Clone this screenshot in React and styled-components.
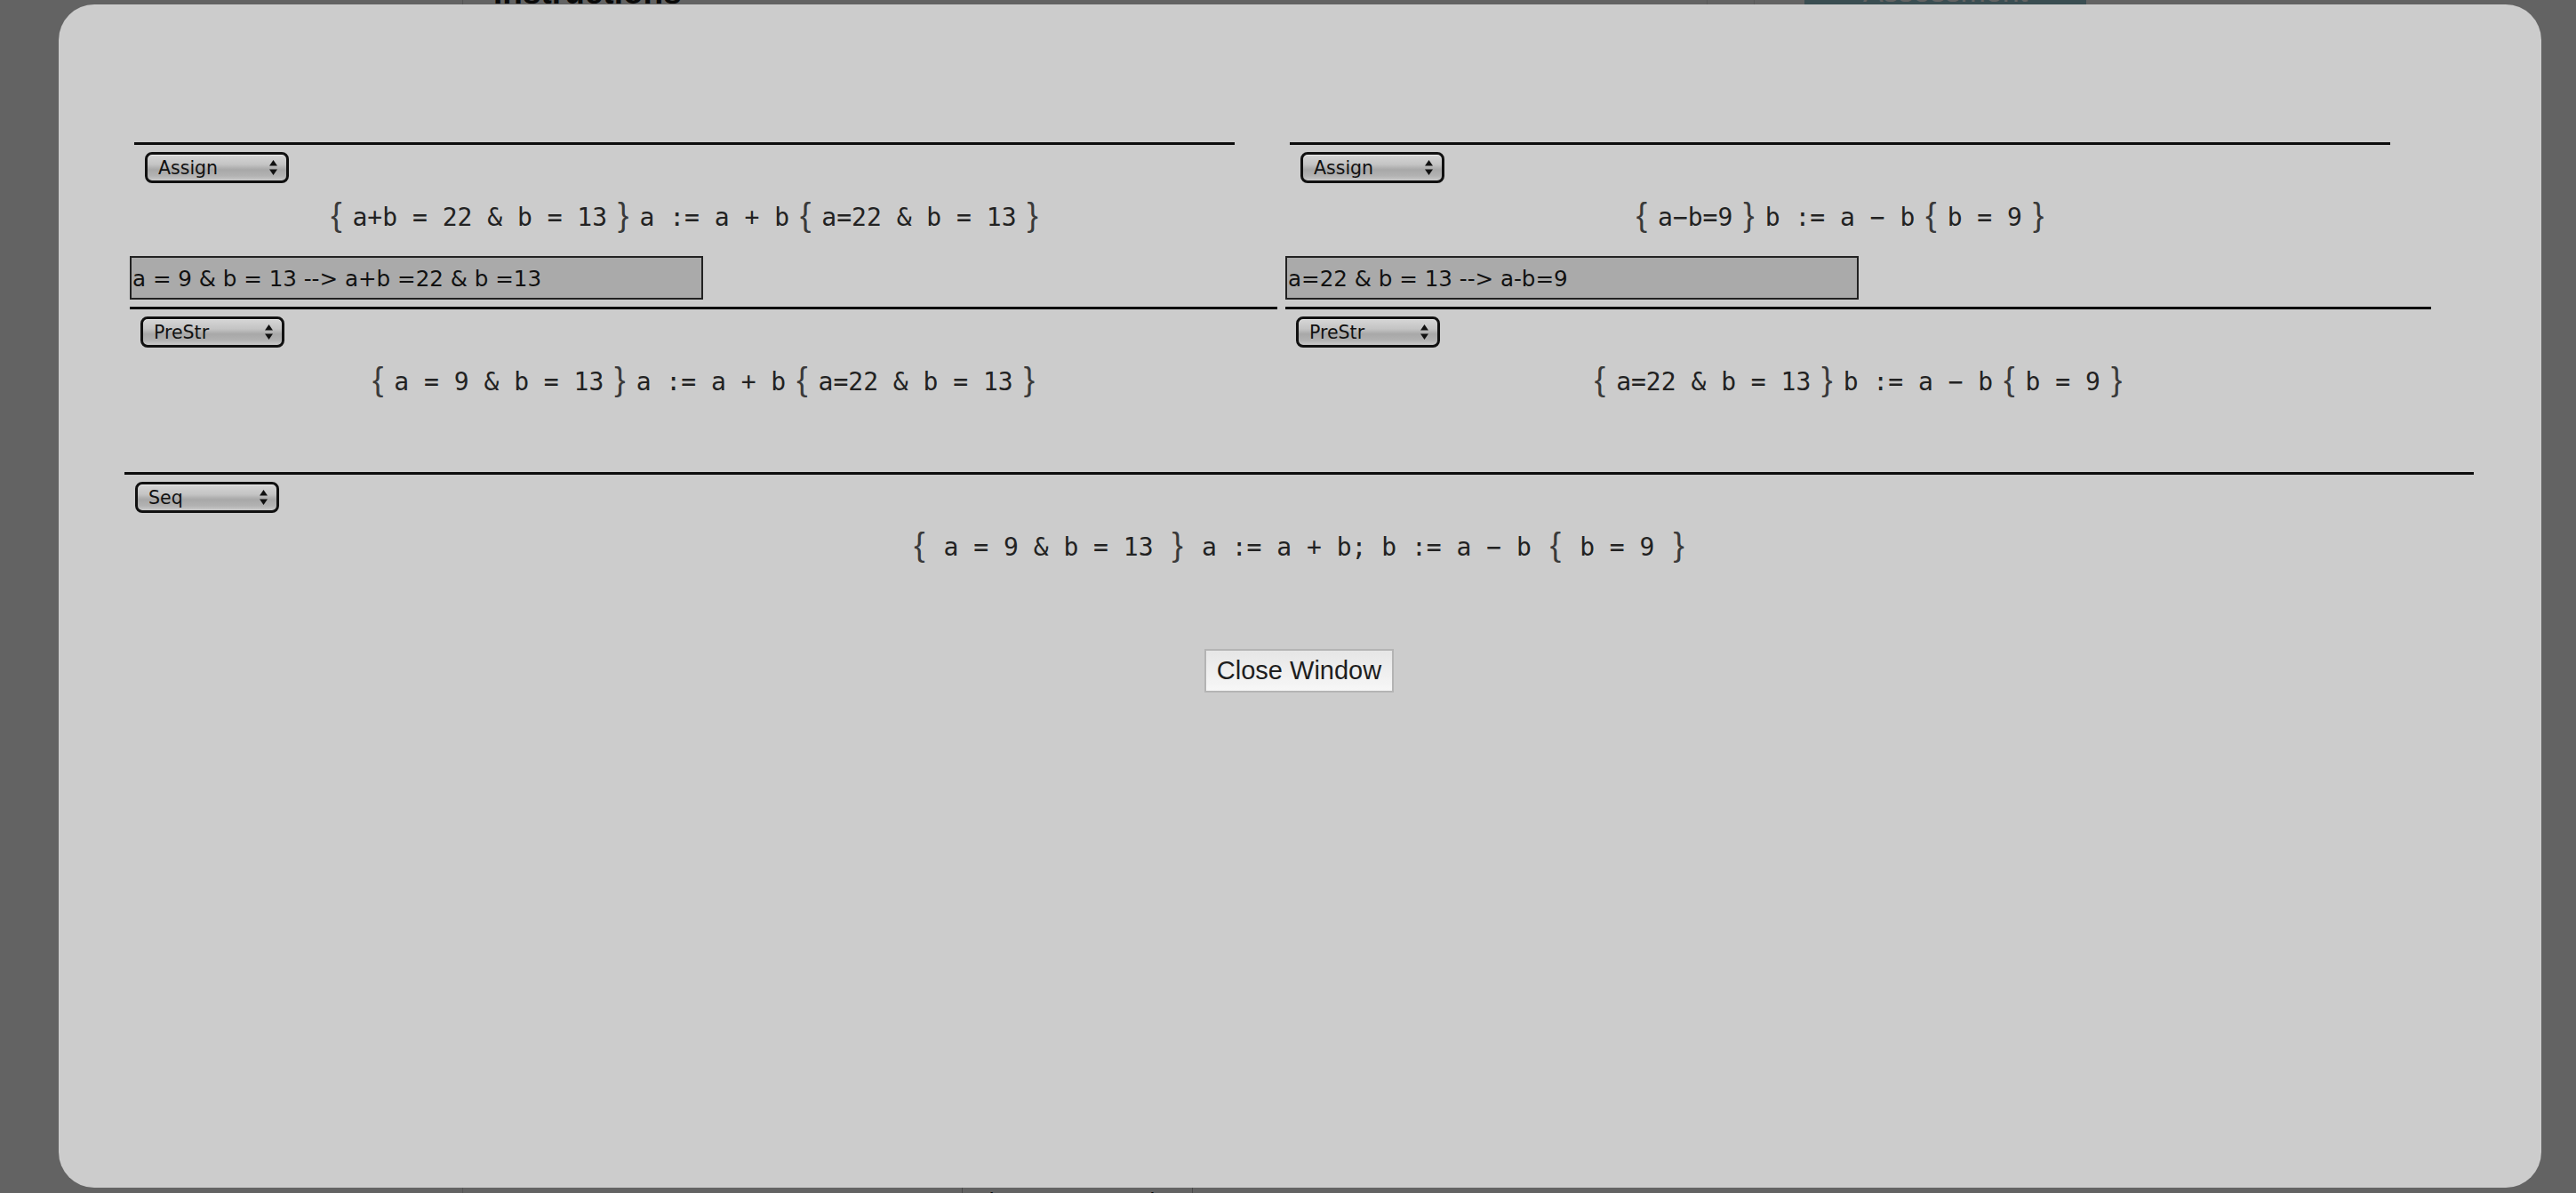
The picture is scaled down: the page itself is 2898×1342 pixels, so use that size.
import React from 'react'
import styled, { createGlobalStyle } from 'styled-components'

const GlobalStyle = createGlobalStyle`
	html, body {
		margin: 0;
		padding: 0;
		height: 100%;
	}
	body {
		font-family: "Liberation Sans", Arial, sans-serif;
		background: #fff;
		overflow: hidden;
	}
	#root {
		height: 100%;
	}
`

/* page behind the dialog */
const Page = styled.div`
	display: flex;
	height: 100vh;
	background: #fff;
`
const Sidebar = styled.aside`
	flex: none;
	width: 520px;
	border-right: 1px solid #dcdcdc;
`
const Main = styled.main`
	flex: 1;
	display: flex;
	flex-direction: column;
	justify-content: space-between;
`
const TopBar = styled.div`
	display: flex;
	align-items: flex-start;
`
const PageTitle = styled.h1`
	margin: -27px 0 0 34px;
	font-size: 37px;
	line-height: 37px;
	font-weight: 700;
	color: #1a1a1a;
`
const Tools = styled.div`
	display: flex;
	align-items: flex-start;
	margin: 0 551px 0 auto;
`
const ToolDivider = styled.span`
	width: 1px;
	height: 40px;
	margin-right: ${p => p.$space}px;
	background: #e4e4e4;
`
const OverviewButton = styled.div`
	width: 317px;
	height: 40px;
	margin-top: -30px;
	background: #97c8d2;
	color: #fff;
	font-size: 34px;
	line-height: 40px;
	text-align: center;
`
const Footer = styled.div`
	display: flex;
	padding-left: 561px;
`
const LargerButton = styled.div`
	margin-bottom: -30px;
	padding: 4px 13px;
	border: 1px solid #bbb;
	font-size: 26px;
	line-height: 32px;
	color: #111;
`
const Overlay = styled.div`
	position: fixed;
	inset: 0;
	background: rgba(0, 0, 0, 0.61);
`

/* dialog */
const Modal = styled.div`
	position: fixed;
	left: 66px;
	top: 5px;
	width: 2793px;
	height: 1331px;
	box-sizing: border-box;
	padding: 155px 76px 0 74px;
	background: #cccccc;
	border-radius: 40px;
	display: flex;
	flex-direction: column;
`
const Node = styled.div`
	display: flex;
	flex-direction: column;
	width: ${p => (p.$width ? `${p.$width}px` : 'auto')};
	margin-left: ${p => p.$indent || 0}px;
`
const Premises = styled.div`
	display: flex;
	flex-direction: ${p => (p.$stack ? 'column' : 'row')};
	align-items: flex-start;
	gap: ${p => p.$gap || 0}px;
	padding-left: ${p => p.$inset || 0}px;
	margin-bottom: ${p => p.$space || 0}px;
`
const Conclusion = styled.div`
	display: flex;
	flex-direction: column;
	border-top: 3px solid #0d0d0d;
	padding-top: 8px;
`
const RuleSelect = styled.div`
	display: flex;
	align-items: center;
	justify-content: space-between;
	box-sizing: border-box;
	width: 162px;
	height: 35px;
	margin-left: 12px;
	padding: 0 10px 0 12px;
	border: 3px solid #111;
	border-radius: 8px;
	background: linear-gradient(180deg, #d6d6d6 0%, #c4c4c4 38%, #a8a8a8 58%, #b2b2b2 82%, #c9c9c9 100%);
	box-shadow: inset 0 1px 0 rgba(255, 255, 255, 0.5);
	font-family: "DejaVu Sans", sans-serif;
	font-size: 20.5px;
	color: #111;
	svg {
		flex: none;
	}
`
const Judgement = styled.div`
	margin-top: 14px;
	height: 44px;
	text-align: center;
	white-space: pre;
	font-family: "DejaVu Sans Mono", monospace;
	font-size: 28px;
	line-height: 44px;
	color: #222;
`
const Brace = styled.span`
	margin: 0 ${p => p.$gap}px;
	font-family: "Liberation Sans", sans-serif;
	font-size: 37px;
	color: #3a3a3a;
`
const Hypothesis = styled.input`
	box-sizing: border-box;
	width: ${p => p.$width}px;
	height: 49px;
	margin-top: 24px;
	padding: 2px 1px 0;
	border: 2px solid #222;
	border-radius: 0;
	background: #aaaaaa;
	font-family: "DejaVu Sans", sans-serif;
	font-size: 24.6px;
	color: #111;
	outline: none;
`
const CloseButton = styled.button`
	align-self: center;
	margin-top: 95px;
	padding: 6px 12px;
	border: 2px solid #b4b4b4;
	border-radius: 0;
	background: linear-gradient(180deg, #e6e6e6, #f7f7f7);
	font-family: "Liberation Sans", Arial, sans-serif;
	font-size: 29px;
	line-height: 33px;
	color: #1e1e1e;
`

const Arrows = () => (
	<svg width="9" height="17" viewBox="0 0 9 17">
		<path d="M0 6.5 L4.5 0 L9 6.5 Z" fill="#111" />
		<path d="M0 10.5 L4.5 17 L9 10.5 Z" fill="#111" />
	</svg>
)

const Formula = ({ pre, prog, post, gap = 12 }) => (
	<Judgement>
		<Brace $gap={gap}>{'{'}</Brace>
		{pre}
		<Brace $gap={gap}>{'}'}</Brace>
		{prog}
		<Brace $gap={gap}>{'{'}</Brace>
		{post}
		<Brace $gap={gap}>{'}'}</Brace>
	</Judgement>
)

const Rule = ({ name, children }) => (
	<Conclusion>
		<RuleSelect>
			<span>{name}</span>
			<Arrows />
		</RuleSelect>
		{children}
	</Conclusion>
)

const columns = [
	{
		width: 1291,
		assign: { pre: 'a+b = 22 & b = 13', prog: 'a := a + b', post: 'a=22 & b = 13' },
		side: 'a = 9 & b = 13 --> a+b =22 & b =13',
		pre: 'a = 9 & b = 13',
		prog: 'a := a + b',
		post: 'a=22 & b = 13',
	},
	{
		width: 1289,
		assign: { pre: 'a−b=9', prog: 'b := a − b', post: 'b = 9' },
		side: 'a=22 & b = 13 --> a-b=9',
		pre: 'a=22 & b = 13',
		prog: 'b := a − b',
		post: 'b = 9',
	},
]

const App = () => {
	return (
		<>
			<GlobalStyle />
			<Page>
				<Sidebar />
				<Main>
					<TopBar>
						<PageTitle>Instructions</PageTitle>
						<Tools>
							<ToolDivider $space={52} />
							<ToolDivider $space={56} />
							<OverviewButton>Assessment overview</OverviewButton>
						</Tools>
					</TopBar>
					<Footer>
						<LargerButton>View Larger Version</LargerButton>
					</Footer>
				</Main>
			</Page>
			<Overlay />
			<Modal>
				<Node>
					<Premises $gap={9} $inset={6} $space={82}>
						{columns.map((col, i) => (
							<Node key={i} $width={col.width}>
								<Premises $stack $space={8}>
									<Node $width={1238} $indent={5}>
										<Rule name="Assign">
											<Formula {...col.assign} />
										</Rule>
									</Node>
									<Hypothesis $width={645} value={col.side} readOnly />
								</Premises>
								<Rule name="PreStr">
									<Formula pre={col.pre} prog={col.prog} post={col.post} />
								</Rule>
							</Node>
						))}
					</Premises>
					<Rule name="Seq">
						<Formula pre="a = 9 & b = 13" prog="a := a + b; b := a − b" post="b = 9" gap={21} />
					</Rule>
				</Node>
				<CloseButton>Close Window</CloseButton>
			</Modal>
		</>
	)
}

export default App
